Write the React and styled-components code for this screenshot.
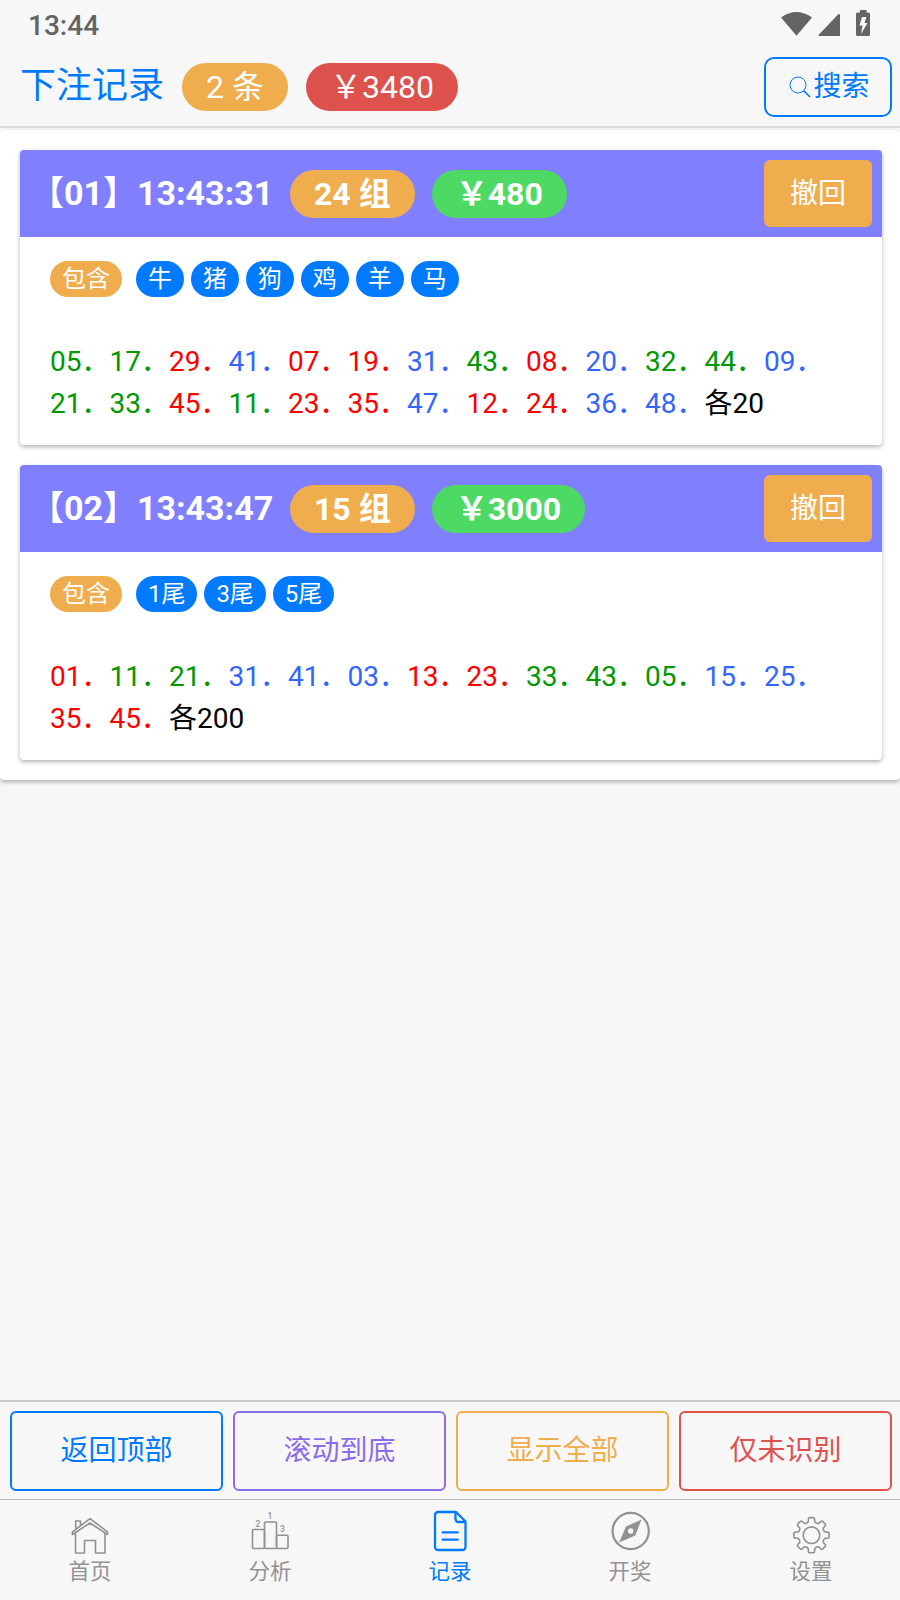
import React from 'react';
import styled, { createGlobalStyle } from 'styled-components';

const GlobalStyle = createGlobalStyle`
	* {
		box-sizing: border-box;
	}
	body {
		margin: 0;
		background-color: #f7f7f7;
		font-family: Roboto, 'Noto Sans CJK SC', sans-serif;
		font-size: 28px;
		color: #000;
	}
`;

const Page = styled.div`
	width: 900px;
	height: 1600px;
	display: flex;
	flex-direction: column;
	background-color: #f7f7f7;
	overflow: hidden;
`;

const StatusBar = styled.div`
	height: 50px;
	padding: 0 29px 0 28px;
	display: flex;
	align-items: center;
	justify-content: space-between;
	color: #646464;
	font-size: 28px;
	font-weight: 500;
`;

const StatusIcons = styled.svg`
	display: block;
	width: 90px;
	height: 26px;
	margin-top: -4px;
`;

const Header = styled.div`
	height: 78px;
	padding: 0 8px 0 20px;
	display: flex;
	align-items: flex-start;
	border-bottom: 2px solid #dadada;
`;

const Title = styled.div`
	width: 162px;
	margin-top: 9px;
	font-size: 36px;
	line-height: 54px;
	color: #007aff;
`;

const SearchButton = styled.button`
	width: 128px;
	height: 60px;
	margin: 7px 0 0 auto;
	padding: 0 0 7px 2px;
	display: flex;
	align-items: center;
	justify-content: center;
	border: 2px solid #007aff;
	border-radius: 10px;
	background: none;
	color: #007aff;
	font-family: inherit;
	font-size: 28px;
`;

const SearchIcon = styled.svg`
	width: 24px;
	height: 24px;
	margin: 6px 1px 0 0;
`;

const Pill = styled.span`
	height: 48px;
	margin: ${(props) => props.$margin || '0'};
	padding: 0 24px;
	border-radius: 24px;
	background-color: ${(props) => props.$color};
	color: white;
	font-size: 32px;
	line-height: 48px;
	white-space: pre;
`;

const Panel = styled.div`
	margin-top: 2px;
	padding: 20px 18px 20px 20px;
	display: flex;
	flex-direction: column;
	gap: 20px;
	background-color: white;
	border-radius: 4px;
	box-shadow: 0 2px 4px rgba(0, 0, 0, 0.3);
`;

const Card = styled.div`
	height: 295px;
	background-color: white;
	border-radius: 4px;
	overflow: hidden;
	box-shadow: 0 2px 4px rgba(0, 0, 0, 0.3);
`;

const CardHeader = styled.div`
	height: 87px;
	padding: 0 10px;
	display: flex;
	align-items: center;
	background-color: #8080ff;
	color: white;
	font-weight: bold;
`;

const CardTitle = styled.div`
	width: 260px;
	margin-top: -7px;
	font-size: 34px;
	white-space: nowrap;
`;

const UndoButton = styled.button`
	width: 108px;
	height: 67px;
	margin-left: auto;
	padding: 0 0 5px;
	border: none;
	border-radius: 6px;
	background-color: #f0ad4e;
	color: white;
	font-family: inherit;
	font-size: 28px;
`;

const Tags = styled.div`
	height: 60px;
	padding: 24px 30px 0;
	display: flex;
	gap: 6.95px;
`;

const Tag = styled.span`
	height: 36px;
	padding: 0 12px;
	margin-right: ${(props) => (props.$first ? '7px' : '0')};
	border-radius: 18px;
	background-color: ${(props) => (props.$first ? '#f0ad4e' : '#007aff')};
	color: white;
	font-size: 24px;
	line-height: 36px;
`;

const Numbers = styled.div`
	padding: 44px 30px 0;
	font-size: 28px;
	line-height: 42px;
`;

const Num = styled.span`
	color: ${(props) => props.$color};
`;

const Actions = styled.div`
	height: 99px;
	margin-top: auto;
	padding: 9px 8px 0 10px;
	display: grid;
	grid-template-columns: repeat(4, 1fr);
	gap: 10px;
	border-top: 2px solid #cacaca;
`;

const ActionButton = styled.button`
	height: 80px;
	padding: 0 0 6px;
	border: 2px solid ${(props) => props.$color};
	border-radius: 6px;
	background: none;
	color: ${(props) => props.$color};
	font-family: inherit;
	font-size: 28px;
`;

const TabBar = styled.div`
	height: 101px;
	display: grid;
	grid-template-columns: repeat(5, 1fr);
	border-top: 1px solid #b2b6b6;
`;

const Tab = styled.div`
	display: flex;
	flex-direction: column;
	align-items: center;
	color: ${(props) => (props.$active ? '#007aff' : '#929292')};
	font-size: 21.4px;
	line-height: 30px;
`;

const TabIcon = styled.svg`
	width: 48px;
	height: 48px;
	margin: 8px 0 1px;
	fill: none;
	stroke: currentColor;
	stroke-width: ${(props) => props.$stroke || 1.6};
	stroke-linejoin: round;
`;

const RED = '#ff0000';
const BLUE = '#3366ff';
const GREEN = '#009900';

// 红波、蓝波，其余为绿波
const reds = [1, 2, 7, 8, 12, 13, 18, 19, 23, 24, 29, 30, 34, 35, 40, 45, 46];
const blues = [3, 4, 9, 10, 14, 15, 20, 25, 26, 31, 36, 37, 41, 42, 47, 48];

const getColor = (num) => {
	if (reds.includes(Number(num))) return RED;
	if (blues.includes(Number(num))) return BLUE;
	return GREEN;
};

const records = [
	{
		id: '01',
		time: '13:43:31',
		count: 24,
		amount: 480,
		each: 20,
		tags: ['牛', '猪', '狗', '鸡', '羊', '马'],
		numbers:
			'05 17 29 41 07 19 31 43 08 20 32 44 09 21 33 45 11 23 35 47 12 24 36 48',
	},
	{
		id: '02',
		time: '13:43:47',
		count: 15,
		amount: 3000,
		each: 200,
		tags: ['1尾', '3尾', '5尾'],
		numbers: '01 11 21 31 41 03 13 23 33 43 05 15 25 35 45',
	},
];

const actions = [
	{ text: '返回顶部', color: '#007aff' },
	{ text: '滚动到底', color: '#8a6de9' },
	{ text: '显示全部', color: '#f0ad4e' },
	{ text: '仅未识别', color: '#dd524d' },
];

const HomeIcon = () => (
	<TabIcon viewBox="0 0 48 48">
		<path d="M6.5 23.8L24 10.600l17.500 13.200v2.700L24 15 6.500 26.500z" />
		<path d="M9.500 25V45h9V32.500h11V45h9.500V25M9.700 21V13h4.800v4.500" />
	</TabIcon>
);

const RankIcon = () => (
	<TabIcon viewBox="0 0 48 48">
		<rect x="6.500" y="21.500" width="12" height="19" rx="1" />
		<rect x="18.500" y="14" width="12" height="26.500" rx="1" />
		<rect x="30.500" y="27.300" width="11.500" height="13.200" rx="1" />
		<g
			fill="currentColor"
			stroke="none"
			fontSize="8.500"
			fontWeight="500"
			textAnchor="middle"
		>
			<text x="12" y="18.800">2</text>
			<text x="24" y="11.300">1</text>
			<text x="36.500" y="23.800">3</text>
		</g>
	</TabIcon>
);

const RecordIcon = () => (
	<TabIcon viewBox="0 0 48 48" $stroke={2.3}>
		<path d="M30 4H12a3 3 0 0 0-3 3v32a3 3 0 0 0 3 3h24.500a3 3 0 0 0 3-3V13.500z" />
		<path d="M29.500 4v7a3 3 0 0 0 3 3h7M15.700 24.300h17M15.700 31.700h17" />
	</TabIcon>
);

const CompassIcon = () => (
	<TabIcon viewBox="0 0 48 48" $stroke={2.2}>
		<circle cx="24.700" cy="23" r="18.100" />
		<path
			d="M35.500 11.500L29.300 27.500 13 34.500 20 18.500z"
			fill="currentColor"
			stroke="none"
		/>
		<circle cx="24.700" cy="23" r="2.700" fill="#f7f7f7" stroke="none" />
	</TabIcon>
);

// 8齿齿轮
const polar = (r, deg) => {
	const a = (deg * Math.PI) / 180;
	return `${(24.5 + r * Math.cos(a)).toFixed(2)} ${(27.2 + r * Math.sin(a)).toFixed(2)}`;
};

const gearPath =
	[0, 45, 90, 135, 180, 225, 270, 315]
		.map((deg, i) => {
			const start = i === 0 ? 'M' : '';
			return `${start}${polar(13.8, deg - 13.5)}L${polar(16.3, deg - 11)}Q${polar(17.8, deg - 10)} ${polar(17.7, deg - 6)}L${polar(17.7, deg + 6)}Q${polar(17.8, deg + 10)} ${polar(16.3, deg + 11)}L${polar(13.8, deg + 13.5)}Q${polar(12.2, deg + 22.5)} `;
		})
		.join('') + polar(13.8, -13.5);

const GearIcon = () => (
	<TabIcon viewBox="0 0 48 48">
		<circle cx="24.500" cy="27.200" r="8.300" />
		<path d={gearPath} />
	</TabIcon>
);

// 最后一项略微右移
const LastTab = styled(Tab)`
	padding-left: 2px;
`;

const tabs = [
	{ text: '首页', icon: <HomeIcon /> },
	{ text: '分析', icon: <RankIcon /> },
	{ text: '记录', icon: <RecordIcon />, active: true },
	{ text: '开奖', icon: <CompassIcon /> },
];

const Record = ({ record }) => (
	<Card>
		<CardHeader>
			<CardTitle>
				【{record.id}】{record.time}
			</CardTitle>
			<Pill $color="#f0ad4e" $margin="0 17px 0 0">
				{record.count} 组
			</Pill>
			<Pill $color="#4cd964">￥{record.amount}</Pill>
			<UndoButton>撤回</UndoButton>
		</CardHeader>
		<Tags>
			<Tag $first>包含</Tag>
			{record.tags.map((tag) => (
				<Tag key={tag}>{tag}</Tag>
			))}
		</Tags>
		<Numbers>
			{record.numbers.split(' ').map((num) => (
				<Num key={num} $color={getColor(num)}>
					{num}．
				</Num>
			))}
			各{record.each}
		</Numbers>
	</Card>
);

const App = () => {
	return (
		<Page>
			<GlobalStyle />
			<StatusBar>
				13:44
				<StatusIcons viewBox="0 0 90 26" fill="#646464">
					<path d="M0 7.500Q15.500-3.500 31 7.500L15.500 25.700z" />
					<path d="M58 4q1 0 1 1v21H38q-1-.5 0-1.500L57 4.500z" />
					<path d="M79 0h6.500v2.500h2q1.500 0 1.500 1.500v20.500q0 1.500-1.500 1.500H76.500q-1.500 0-1.500-1.500V4q0-1.500 1.500-1.500h2.500z" />
					<path d="M81 7l-2.500 8.500h3L80 24l6.500-11h-3l2-6z" fill="#f7f7f7" />
				</StatusIcons>
			</StatusBar>
			<Header>
				<Title>下注记录</Title>
				<Pill $color="#f0ad4e" $margin="13px 18px 0 0">
					2 条
				</Pill>
				<Pill $color="#dd524d" $margin="13px 0 0">
					￥3480
				</Pill>
				<SearchButton>
					<SearchIcon viewBox="0 0 24 24" fill="none" stroke="currentColor">
						<circle cx="10" cy="10" r="8" strokeWidth="1" />
						<path d="M15.500 15.500l6.500 6.500" strokeWidth="1.600" />
					</SearchIcon>
					搜索
				</SearchButton>
			</Header>
			<Panel>
				{records.map((record) => (
					<Record key={record.id} record={record} />
				))}
			</Panel>
			<Actions>
				{actions.map((action) => (
					<ActionButton key={action.text} $color={action.color}>
						{action.text}
					</ActionButton>
				))}
			</Actions>
			<TabBar>
				{tabs.map((tab) => (
					<Tab key={tab.text} $active={tab.active}>
						{tab.icon}
						{tab.text}
					</Tab>
				))}
				<LastTab>
					<GearIcon />
					设置
				</LastTab>
			</TabBar>
		</Page>
	);
};

export default App;
